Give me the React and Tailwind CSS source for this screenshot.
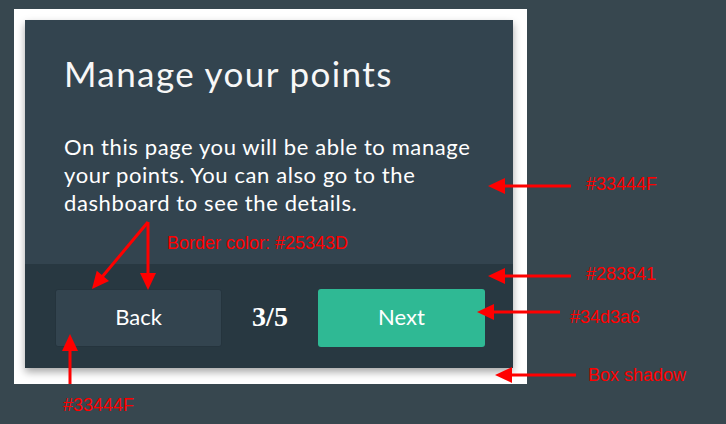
import React from "react";

const red = "#ff0000";

const Arrow = ({ x1, y1, x2, y2 }) => {
    const dx = x2 - x1;
    const dy = y2 - y1;
    const len = Math.sqrt(dx * dx + dy * dy);
    const ux = dx / len;
    const uy = dy / len;
    const head = 17;
    const half = 8;
    const bx = x2 - ux * head;
    const by = y2 - uy * head;
    const pts = `${x2},${y2} ${bx - uy * half},${by + ux * half} ${bx + uy * half},${by - ux * half}`;
    return (
        <g>
            <line x1={x1} y1={y1} x2={bx + ux * 2} y2={by + uy * 2} stroke={red} strokeWidth="3" />
            <polygon points={pts} fill={red} />
        </g>
    );
};

const Label = ({ left, top, children }) => (
    <div
        className="absolute text-[18px] leading-none text-[#ff0000] whitespace-nowrap"
        style={{ left, top, fontFamily: '"Liberation Sans", Arial, sans-serif' }}
    >
        {children}
    </div>
);

const arrows = [
    { x1: 148, y1: 222, x2: 92, y2: 289 },
    { x1: 148, y1: 222, x2: 148, y2: 290 },
    { x1: 571, y1: 186, x2: 488, y2: 186 },
    { x1: 571, y1: 276, x2: 488, y2: 276 },
    { x1: 560, y1: 312, x2: 477, y2: 312 },
    { x1: 576, y1: 375, x2: 495, y2: 375 },
    { x1: 70, y1: 384, x2: 70, y2: 334 },
];

const App = () => {
    return (
        <div className="relative w-[726px] h-[424px] bg-[#37474f] overflow-hidden">
            {/* marco blanco */}
            <div className="absolute left-[14px] top-[9px] bg-white pl-[11px] pt-[11px] pr-[14px] pb-[16px]">
                <div
                    className="w-[488px] h-[348px] flex flex-col bg-[#33444f] shadow-[0_4px_8px_rgba(0,0,0,0.35)]"
                    style={{ fontFamily: 'Lato, "Open Sans", sans-serif' }}
                >
                    <div className="flex-1 pl-[39px] pr-[30px] pt-[31px]">
                        <h1 className="text-[35px] leading-[44px] tracking-[1.4px] text-[#f7f7f7]">Manage your points</h1>
                        <p className="mt-[38px] w-[420px] text-[22px] leading-[28px] tracking-[0.6px] text-white">
                            On this page you will be able to manage your points. You can also go to the dashboard to see the details.
                        </p>
                    </div>
                    <div className="h-[104px] bg-[#283841] flex items-center justify-between pl-[30px] pr-[28px] pt-[4px]">
                        <button className="w-[167px] h-[58px] pb-[3px] rounded-[3px] border border-[#25343d] bg-[#33444f] text-white text-[22px]">
                            Back
                        </button>
                        <span
                            className="pb-[3px] text-[28px] font-bold text-white"
                            style={{ fontFamily: '"Liberation Serif", serif' }}
                        >
                            3/5
                        </span>
                        <button className="w-[167px] h-[58px] pb-[3px] rounded-[3px] bg-[#2fb994] text-white text-[22px]">
                            Next
                        </button>
                    </div>
                </div>
            </div>

            {/* anotaciones */}
            <svg className="absolute left-0 top-0" width="726" height="424">
                {arrows.map((a, i) => (
                    <Arrow key={i} {...a} />
                ))}
            </svg>
            <Label left={167} top={234}>Border color: #25343D</Label>
            <Label left={586} top={175}>#33444F</Label>
            <Label left={586} top={265}>#283841</Label>
            <Label left={570} top={308}>#34d3a6</Label>
            <Label left={588} top={366}>Box shadow</Label>
            <Label left={63} top={396}>#33444F</Label>
        </div>
    );
};

export default App;
